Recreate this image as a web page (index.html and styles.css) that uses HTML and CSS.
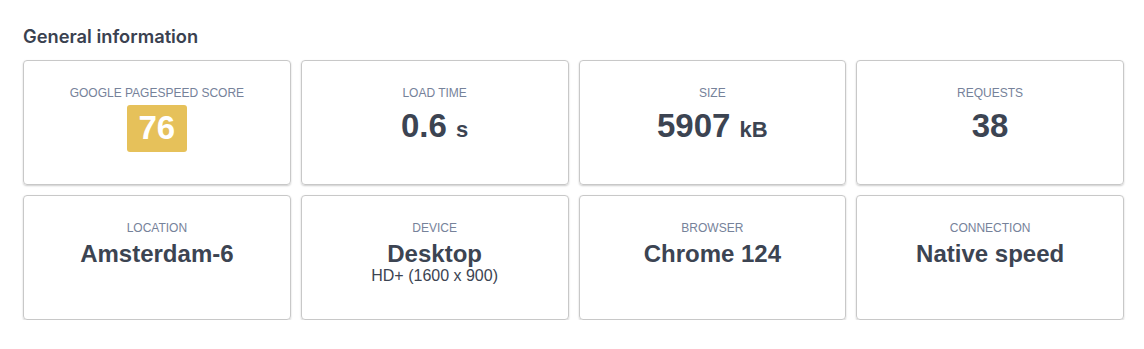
FILE: index.html
```html
<!doctype html>
<html lang="en">
<head>
	<meta charset="UTF-8">
	<title>General information</title>
	<link rel="stylesheet" href="styles.css">
</head>
<body>
	<div class="section">
		<h2 class="title">General information</h2>
		<div class="cards">
			<div class="card">
				<div class="label">Google PageSpeed score</div>
				<div class="value score-row"><span class="score">76</span></div>
			</div>
			<div class="card">
				<div class="label">Load time</div>
				<div class="value">0.6 <span class="unit">s</span></div>
			</div>
			<div class="card">
				<div class="label">Size</div>
				<div class="value">5907 <span class="unit">kB</span></div>
			</div>
			<div class="card">
				<div class="label">Requests</div>
				<div class="value">38</div>
			</div>
			<div class="card">
				<div class="label">Location</div>
				<div class="value small">Amsterdam-6</div>
			</div>
			<div class="card">
				<div class="label">Device</div>
				<div class="value small">Desktop</div>
				<div class="sub">HD+ (1600 x 900)</div>
			</div>
			<div class="card">
				<div class="label">Browser</div>
				<div class="value small">Chrome 124</div>
			</div>
			<div class="card">
				<div class="label">Connection</div>
				<div class="value small">Native speed</div>
			</div>
		</div>
	</div>
</body>
</html>
```

FILE: styles.css
```css
body {
	margin: 0;
	padding: 0;
	background: #fff;
	font-family: "Liberation Sans", Arial, sans-serif;
	color: #3c4452;
}
.section {
	padding: 24px 20px 0 23px;
}
.title {
	margin: 0 0 12px;
	font-family: Inter, "Liberation Sans", sans-serif;
	font-size: 18.3px;
	font-weight: 600;
	line-height: 24px;
	color: #3a4150;
}
.cards {
	display: grid;
	grid-template-columns: repeat(4, 1fr);
	gap: 10px 10px;
}
.card {
	box-sizing: border-box;
	height: 125px;
	padding-top: 23px;
	border: 1px solid #c8c8c8;
	border-radius: 4px;
	box-shadow: 0 1px 2px rgba(0, 0, 0, 0.2);
	text-align: center;
}
.label {
	font-size: 12px;
	line-height: 18px;
	text-transform: uppercase;
	color: #76829a;
	margin-bottom: 3px;
}
.value {
	margin-top: 5px;
	font-size: 33px;
	font-weight: bold;
	line-height: 38px;
	color: #3c4452;
}
.value.score-row {
	margin-top: 1px;
}
.value.small {
	margin-top: 0;
	font-size: 24px;
	line-height: 27px;
}
.unit {
	font-size: 22px;
}
.score {
	display: inline-block;
	padding: 4px 12px 5px;
	border-radius: 3px;
	background: #e6c15a;
	color: #fff;
}
.sub {
	font-size: 16px;
	line-height: 18px;
	color: #3c4452;
}
```
